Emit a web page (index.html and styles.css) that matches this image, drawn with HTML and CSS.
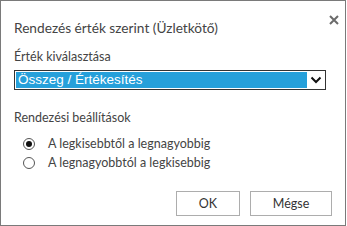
FILE: index.html
```html
<!DOCTYPE html>
<html>
<head>
  <title>Rendezés érték szerint</title>
  <link rel="stylesheet" href="styles.css">
</head>
<body>
  <div class="dialog">
    <div class="dialog-header">
      <span class="dialog-title">Rendezés érték szerint (Üzletkötő)</span>
      <span class="close" title="Bezárás">
        <svg width="10" height="10" viewBox="0 0 10 10">
          <path d="M1 1 L9 9 M9 1 L1 9" stroke="#6b6b6b" stroke-width="2" fill="none"/>
        </svg>
      </span>
    </div>

    <div class="field-label">Érték kiválasztása</div>
    <div class="select-box">
      <div class="select-value">Összeg / Értékesítés</div>
      <div class="select-arrow">
        <svg width="12" height="8" viewBox="0 0 12 8">
          <path d="M1.5 1.5 L6 6 L10.5 1.5" stroke="#111" stroke-width="2" fill="none"/>
        </svg>
      </div>
    </div>

    <div class="field-label section">Rendezési beállítások</div>
    <div class="radio-list">
      <label class="radio-row">
        <span class="radio checked"></span>
        <span>A legkisebbtől a legnagyobbig</span>
      </label>
      <label class="radio-row">
        <span class="radio"></span>
        <span>A legnagyobbtól a legkisebbig</span>
      </label>
    </div>

    <div class="dialog-buttons">
      <button class="btn btn-ok">OK</button>
      <button class="btn btn-cancel">Mégse</button>
    </div>
  </div>
</body>
</html>
```

FILE: styles.css
```css
body {
  margin: 0;
  background-color: #fff;
  font-family: Lato, "Noto Sans", sans-serif;
  font-size: 12.5px;
  color: #444;
}

.dialog {
  box-sizing: border-box;
  width: 346px;
  height: 226px;
  border: 1px solid #7a7a7a;
  padding: 0 13px;
  background-color: #fff;
}

.dialog-header {
  display: flex;
  justify-content: space-between;
  align-items: center;
  height: 43px;
  padding-top: 9px;
  box-sizing: border-box;
}

.dialog-title {
  font-size: 13.7px;
  color: #444;
}

.close {
  display: flex;
  margin-right: -7px;
  margin-top: -15px;
}

.field-label {
  line-height: 16px;
  margin-top: 5px;
  margin-bottom: 5px;
}

.field-label.section {
  margin-top: 20px;
  margin-bottom: 8px;
}

.select-box {
  box-sizing: border-box;
  width: 312px;
  height: 20px;
  border: 1px solid #333;
  padding: 1px;
  display: flex;
  background-color: #fff;
}

.select-value {
  flex: 1;
  background-color: #26a0da;
  color: #fff;
  font-family: "Liberation Sans", Arial, sans-serif;
  font-size: 13.5px;
  line-height: 16px;
  padding-left: 2px;
}

.select-arrow {
  width: 17px;
  display: flex;
  align-items: center;
  justify-content: center;
}

.radio-list {
  padding-left: 9px;
}

.radio-row {
  display: flex;
  align-items: center;
  height: 19px;
}

.radio {
  box-sizing: border-box;
  width: 12px;
  height: 12px;
  border: 1px solid #555;
  border-radius: 50%;
  margin-right: 13px;
  display: flex;
  align-items: center;
  justify-content: center;
}

.radio.checked::after {
  content: "";
  width: 6px;
  height: 6px;
  border-radius: 50%;
  background-color: #111;
}

.dialog-buttons {
  display: flex;
  justify-content: flex-end;
  gap: 10px;
  margin-top: 19px;
}

.btn {
  height: 25px;
  border: 1px solid #adadad;
  background-color: #fff;
  color: #333;
  font-family: Lato, "Noto Sans", sans-serif;
  font-size: 12.5px;
  padding: 0;
}

.btn-ok {
  width: 64px;
}

.btn-cancel {
  width: 82px;
}
```
